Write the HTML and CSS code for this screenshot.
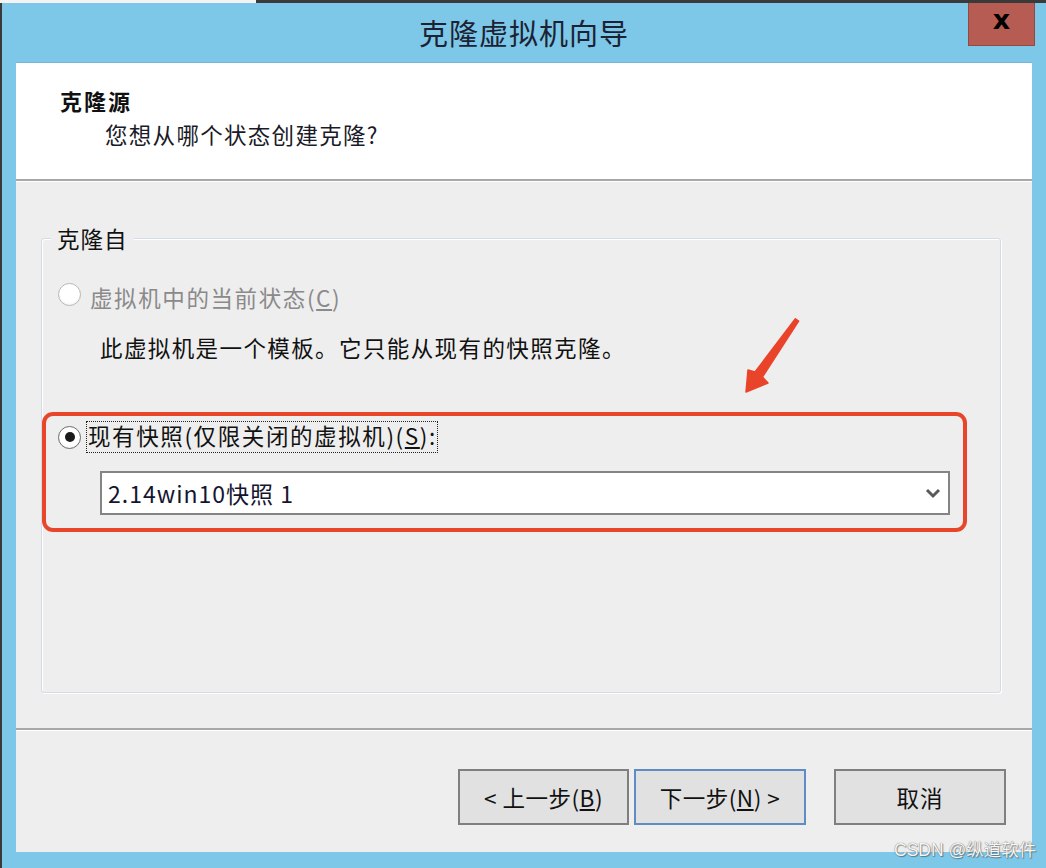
FILE: index.html
```html
<!DOCTYPE html>
<html lang="zh-CN">
<head>
<meta charset="utf-8">
<title>克隆虚拟机向导</title>
<link rel="stylesheet" href="styles.css">
</head>
<body>
<div class="screen">
  <div class="topstrip"><div class="tw"></div><div class="td"></div></div>
  <div class="window">
    <div class="titlebar">
      <div class="title">克隆虚拟机向导</div>
      <div class="close">x</div>
    </div>
    <div class="dialog">
      <div class="header">
        <div class="h-title">克隆源</div>
        <div class="h-sub">您想从哪个状态创建克隆?</div>
      </div>
      <div class="body">
        <div class="group">
          <span class="legend">克隆自</span>
          <div class="opt opt-disabled">
            <span class="radio"></span>
            <span class="opt-label">虚拟机中的当前状态(<u>C</u>)</span>
          </div>
          <div class="note">此虚拟机是一个模板。它只能从现有的快照克隆。</div>
          <div class="highlight">
            <div class="opt">
              <span class="radio checked"></span>
              <span class="opt-label focus">现有快照(仅限关闭的虚拟机)(<u>S</u>):</span>
            </div>
            <div class="combo">
              <span class="combo-text">2.14win10快照 1</span>
              <svg class="chev" width="16" height="12" viewBox="0 0 16 12"><polyline points="2,3 8,9 14,3" fill="none" stroke="#5a5a5a" stroke-width="3"/></svg>
            </div>
          </div>
        </div>
        <svg class="arrow" width="56" height="80" viewBox="0 0 56 80"><polygon points="1,76 3,54 10,56 50.4,2.8 53.6,5.2 17.4,61 23,67" fill="#E9442A" stroke="#E9442A" stroke-width="1.5" stroke-linejoin="round"/></svg>
      </div>
      <div class="footer">
        <div class="btn">&lt; 上一步(<u>B</u>)</div>
        <div class="btn btn-default">下一步(<u>N</u>) &gt;</div>
        <div class="btn btn-cancel">取消</div>
      </div>
    </div>
  </div>
  <div class="watermark">CSDN @纵道软件</div>
</div>
</body>
</html>
```
FILE: styles.css
```css
* { box-sizing: border-box; }
html, body { margin: 0; padding: 0; }
body {
  font-family: "Noto Sans CJK SC", "Noto Sans", sans-serif;
  color: #111;
  background: #7DC7E8;
}
.screen {
  position: relative;
  width: 1046px;
  height: 868px;
  display: flex;
  flex-direction: column;
  overflow: hidden;
}
.topstrip { height: 3px; display: flex; }
.tw { width: 256px; background: #f4f4f4; }
.td { flex: 1; background: #3a3a3a; }
.window {
  flex: 1;
  display: flex;
  flex-direction: column;
  background: #7DC7E8;
  border-left: 2px solid #3a3a3a;
  padding: 0 14px 15px 14px;
}
.titlebar {
  height: 60px;
  position: relative;
  display: flex;
  align-items: center;
  justify-content: center;
  border-bottom: 1px solid #79B5D6;
}
.title {
  font-size: 29px;
  line-height: 40px;
  color: #1c2233;
  letter-spacing: 1px;
  margin-top: -1px;
}
.close {
  position: absolute;
  left: 952px;
  top: 0;
  width: 67px;
  height: 43px;
  background: #B75C53;
  border: 1px solid #8f4a44;
  border-top: none;
  color: #000;
  font-family: "DejaVu Sans", sans-serif;
  font-weight: bold;
  font-size: 27px;
  line-height: 34px;
  text-align: center;
}
.dialog {
  height: 789px;
  display: flex;
  flex-direction: column;
  background: #EEEEEE;
}
.header {
  height: 118px;
  background: #fff;
  border-bottom: 2px solid #A8A8A8;
  padding: 22px 0 0 44px;
}
.h-title {
  font-size: 22px;
  font-weight: bold;
  line-height: 30px;
  letter-spacing: 2px;
}
.h-sub {
  font-size: 22.5px;
  line-height: 30px;
  margin-top: 4px;
  padding-left: 45px;
  color: #1a1a28;
  letter-spacing: 1.3px;
}
.body {
  flex: 1;
  position: relative;
  border-top: 1px solid #fff;
  padding: 56px 31px 0 25px;
}
.group {
  position: relative;
  height: 455px;
  border: 1px solid #D3DCE6;
  border-radius: 3px;
  box-shadow: 1px 1px 0 #fff, inset 1px 1px 0 #fff;
  padding-top: 40px;
}
.legend {
  position: absolute;
  left: 9px;
  top: -16px;
  padding: 0 6px;
  background: #EEEEEE;
  font-size: 22.5px;
  line-height: 30px;
  letter-spacing: 1px;
}
.opt {
  display: flex;
  align-items: center;
  height: 30px;
  padding-left: 16px;
  font-size: 22.5px;
  letter-spacing: 1.6px;
}
.opt-disabled { color: #8a8a8a; }
.opt-disabled .opt-label { margin-top: 5px; margin-left: 9px; }
.radio {
  width: 23px;
  height: 23px;
  border-radius: 50%;
  border: 1.5px solid #B8B8B8;
  background: radial-gradient(circle at 50% 40%, #ffffff 55%, #ececec 100%);
  flex: none;
  display: flex;
  align-items: center;
  justify-content: center;
}
.radio.checked { border-color: #6b6b6b; }
.radio.checked::after {
  content: "";
  width: 10px;
  height: 10px;
  border-radius: 50%;
  background: #1a1a1a;
}
.note {
  margin-top: 23px;
  padding-left: 58px;
  font-size: 22.5px;
  line-height: 30px;
  letter-spacing: 1.4px;
}
.highlight {
  margin: 50px 33px 0 0;
  border: 4px solid #E9452B;
  border-radius: 11px;
  padding: 6px 13px 13px 0;
}
.highlight .opt { padding-left: 12px; }
.focus {
  margin-left: 6px;
  height: 30px;
  line-height: 27px;
  padding: 0 0 0 1px;
  outline: 1px dotted #222;
  border: none;
}
.combo {
  margin: 19px 0 0 54px;
  height: 44px;
  background: #fff;
  border: 2px solid #848484;
  display: flex;
  align-items: center;
  justify-content: space-between;
  padding: 0 7px 0 6px;
}
.combo-text {
  font-size: 23px;
  line-height: 30px;
  color: #151530;
  letter-spacing: 1px;
}
.chev { flex: none; }
.arrow {
  position: absolute;
  left: 729px;
  top: 134px;
}
.footer {
  height: 124px;
  border-top: 2px solid #A8A8A8;
  box-shadow: inset 0 1px 0 #fff;
  display: flex;
  justify-content: flex-end;
  align-items: flex-start;
  padding: 39px 26px 0 0;
}
.btn {
  width: 171px;
  height: 56px;
  background: #E1E1E1;
  border: 2px solid #7F7F7F;
  font-size: 22.5px;
  display: flex;
  align-items: center;
  justify-content: center;
  color: #111;
  letter-spacing: 0.5px;
}
.btn-default {
  margin-left: 5px;
  width: 172px;
  border-color: #5F8CC4;
}
.btn-cancel {
  margin-left: 28px;
  width: 172px;
  letter-spacing: 1px;
}
.watermark {
  position: absolute;
  left: 894px;
  top: 838px;
  font-family: "Liberation Sans", "Noto Sans CJK SC", sans-serif;
  font-size: 17.5px;
  line-height: 24px;
  color: #f6f6f6;
  text-shadow: 0 0 1px #555, 1px 1px 1px rgba(0,0,0,0.35);
  white-space: nowrap;
}
```
